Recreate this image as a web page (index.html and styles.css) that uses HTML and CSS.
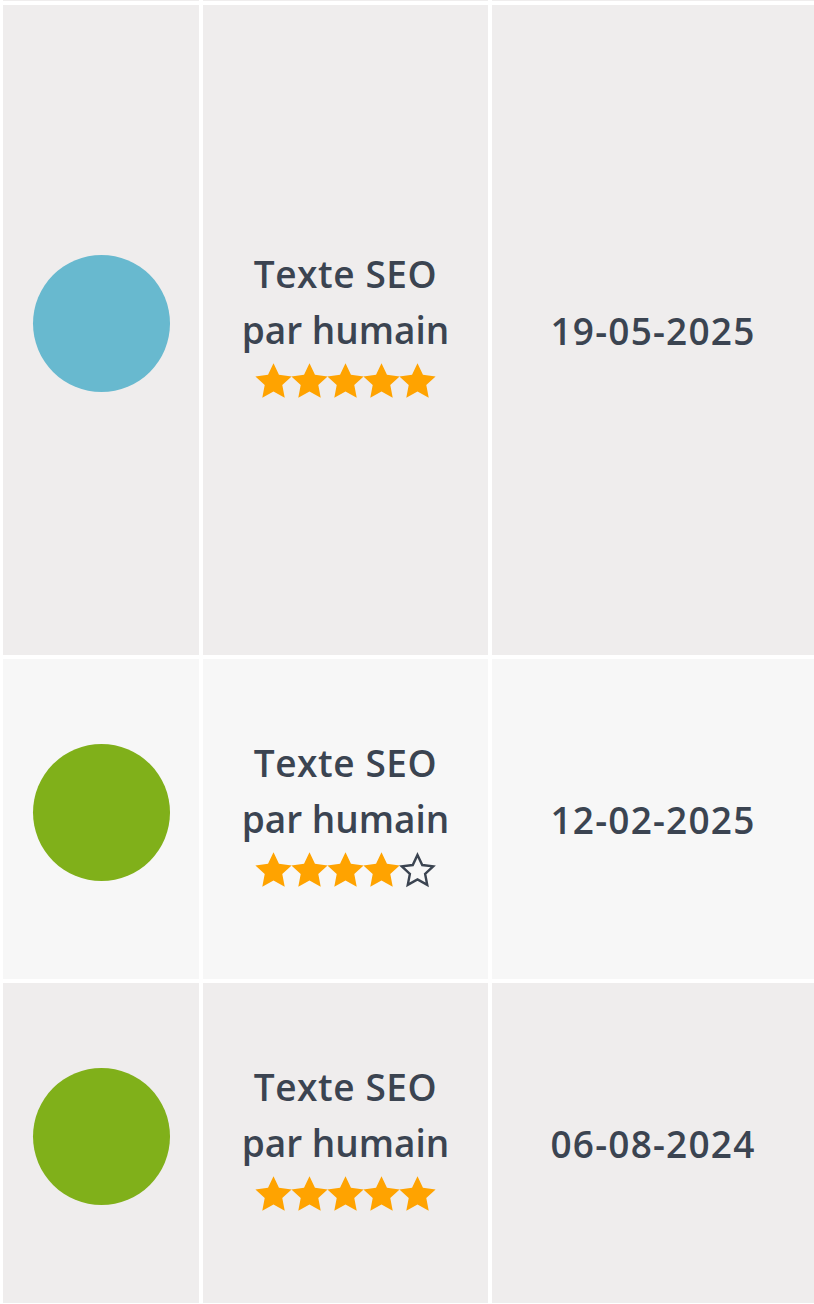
FILE: index.html
```html
<!DOCTYPE html>
<html lang="fr">
<head>
<meta charset="utf-8">
<title>Avis</title>
<link rel="stylesheet" href="styles.css">
</head>
<body>
<div class="reviews">
  <div class="cell tail odd"></div><div class="cell tail odd"></div><div class="cell tail odd"></div>

  <div class="cell odd"><span class="dot blue"></span></div>
  <div class="cell odd">
    <div class="product">
      <div class="title">Texte SEO<br>par humain</div>
      <div class="stars">
        <svg class="star full" viewBox="0 0 24 24"><path d="M12 1.8l3.05 6.5 7.05.85-5.2 4.85 1.36 7.05L12 17.55 5.74 21.05 7.1 14l-5.2-4.85 7.05-.85z"/></svg>
        <svg class="star full" viewBox="0 0 24 24"><path d="M12 1.8l3.05 6.5 7.05.85-5.2 4.85 1.36 7.05L12 17.55 5.74 21.05 7.1 14l-5.2-4.85 7.05-.85z"/></svg>
        <svg class="star full" viewBox="0 0 24 24"><path d="M12 1.8l3.05 6.5 7.05.85-5.2 4.85 1.36 7.05L12 17.55 5.74 21.05 7.1 14l-5.2-4.85 7.05-.85z"/></svg>
        <svg class="star full" viewBox="0 0 24 24"><path d="M12 1.8l3.05 6.5 7.05.85-5.2 4.85 1.36 7.05L12 17.55 5.74 21.05 7.1 14l-5.2-4.85 7.05-.85z"/></svg>
        <svg class="star full" viewBox="0 0 24 24"><path d="M12 1.8l3.05 6.5 7.05.85-5.2 4.85 1.36 7.05L12 17.55 5.74 21.05 7.1 14l-5.2-4.85 7.05-.85z"/></svg>
      </div>
    </div>
  </div>
  <div class="cell odd"><span class="date">19-05-2025</span></div>

  <div class="cell even"><span class="dot green"></span></div>
  <div class="cell even">
    <div class="product">
      <div class="title">Texte SEO<br>par humain</div>
      <div class="stars">
        <svg class="star full" viewBox="0 0 24 24"><path d="M12 1.8l3.05 6.5 7.05.85-5.2 4.85 1.36 7.05L12 17.55 5.74 21.05 7.1 14l-5.2-4.85 7.05-.85z"/></svg>
        <svg class="star full" viewBox="0 0 24 24"><path d="M12 1.8l3.05 6.5 7.05.85-5.2 4.85 1.36 7.05L12 17.55 5.74 21.05 7.1 14l-5.2-4.85 7.05-.85z"/></svg>
        <svg class="star full" viewBox="0 0 24 24"><path d="M12 1.8l3.05 6.5 7.05.85-5.2 4.85 1.36 7.05L12 17.55 5.74 21.05 7.1 14l-5.2-4.85 7.05-.85z"/></svg>
        <svg class="star full" viewBox="0 0 24 24"><path d="M12 1.8l3.05 6.5 7.05.85-5.2 4.85 1.36 7.05L12 17.55 5.74 21.05 7.1 14l-5.2-4.85 7.05-.85z"/></svg>
        <svg class="star empty" viewBox="0 0 24 24"><path d="M12 3.3l2.65 5.65 6.1.74-4.5 4.2 1.18 6.1L12 16.95 6.57 20l1.18-6.1-4.5-4.2 6.1-.74z"/></svg>
      </div>
    </div>
  </div>
  <div class="cell even"><span class="date">12-02-2025</span></div>

  <div class="cell odd"><span class="dot green"></span></div>
  <div class="cell odd">
    <div class="product">
      <div class="title">Texte SEO<br>par humain</div>
      <div class="stars">
        <svg class="star full" viewBox="0 0 24 24"><path d="M12 1.8l3.05 6.5 7.05.85-5.2 4.85 1.36 7.05L12 17.55 5.74 21.05 7.1 14l-5.2-4.85 7.05-.85z"/></svg>
        <svg class="star full" viewBox="0 0 24 24"><path d="M12 1.8l3.05 6.5 7.05.85-5.2 4.85 1.36 7.05L12 17.55 5.74 21.05 7.1 14l-5.2-4.85 7.05-.85z"/></svg>
        <svg class="star full" viewBox="0 0 24 24"><path d="M12 1.8l3.05 6.5 7.05.85-5.2 4.85 1.36 7.05L12 17.55 5.74 21.05 7.1 14l-5.2-4.85 7.05-.85z"/></svg>
        <svg class="star full" viewBox="0 0 24 24"><path d="M12 1.8l3.05 6.5 7.05.85-5.2 4.85 1.36 7.05L12 17.55 5.74 21.05 7.1 14l-5.2-4.85 7.05-.85z"/></svg>
        <svg class="star full" viewBox="0 0 24 24"><path d="M12 1.8l3.05 6.5 7.05.85-5.2 4.85 1.36 7.05L12 17.55 5.74 21.05 7.1 14l-5.2-4.85 7.05-.85z"/></svg>
      </div>
    </div>
  </div>
  <div class="cell odd"><span class="date">06-08-2024</span></div>
</div>
</body>
</html>
```

FILE: styles.css
```css
html, body {
  margin: 0;
  padding: 0;
  background: #ffffff;
}

body {
  font-family: "Open Sans", "Noto Sans", sans-serif;
  color: #3b4451;
  overflow: hidden;
}

.reviews {
  display: grid;
  grid-template-columns: 196px 285px 322px;
  grid-template-rows: 1px 650px 320px 320px;
  column-gap: 4px;
  row-gap: 4px;
  padding-left: 3px;
}

.cell {
  display: flex;
  align-items: center;
  justify-content: center;
}

.odd { background: #efeded; }
.even { background: #f7f7f7; }

.dot {
  display: block;
  width: 137px;
  height: 137px;
  border-radius: 50%;
  margin-bottom: 14px;
}
.blue { background: #68b9cf; }
.green { background: #80b01a; }

.product {
  display: flex;
  flex-direction: column;
  align-items: center;
  margin-top: -3px;
}

.title {
  font-size: 37px;
  font-weight: 600;
  line-height: 56px;
  text-align: center;
}
.title::first-line {
  letter-spacing: 0.6px;
}

.stars {
  display: flex;
  height: 52px;
  align-items: flex-start;
  padding-top: 2px;
}

.star {
  width: 43px;
  height: 43px;
  margin: 0 -3.5px;
}
.star.full path { fill: #ffa300; }
.star.empty path { fill: none; stroke: #3b4451; stroke-width: 1.35; stroke-linejoin: miter; }

.date {
  font-size: 37px;
  font-weight: 600;
  letter-spacing: 1.2px;
}
```
